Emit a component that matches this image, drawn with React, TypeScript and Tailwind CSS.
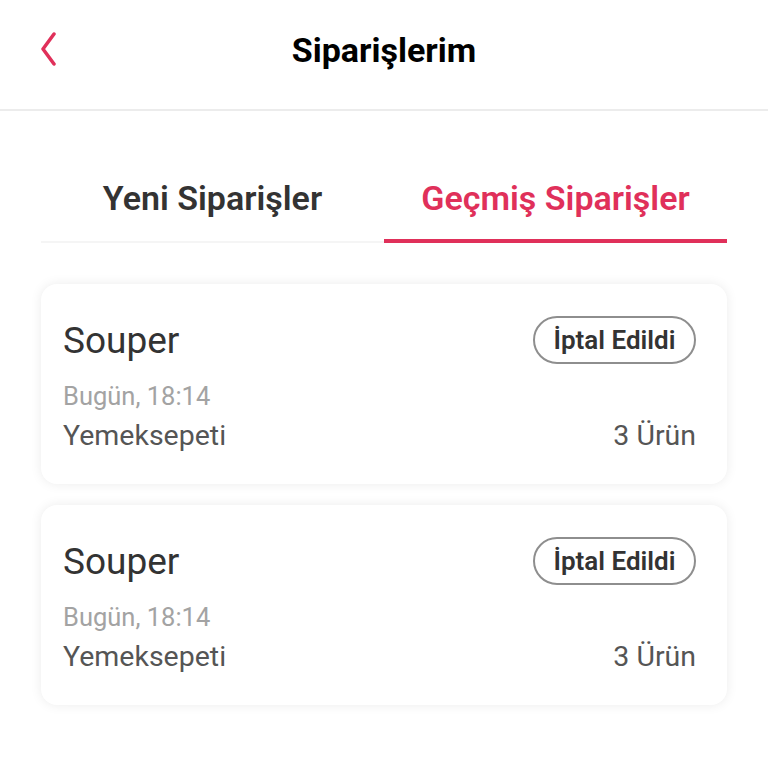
import React from "react";

const Card = () => (
  <div className="rounded-[16px] bg-white shadow-[0_0_12px_rgba(0,0,0,0.08)] pl-[22px] pr-[31px] pt-[32px] pb-[31px]">
    <div className="flex items-center justify-between">
      <span className="text-[37px] leading-[44px] text-[#333] mt-[2px]">Souper</span>
      <span className="h-[48px] w-[163px] flex items-center justify-center rounded-full border-2 border-[#8e8e8e] text-[26px] font-semibold text-[#333]">İptal Edildi</span>
    </div>
    <div className="mt-[17px] text-[25.5px] leading-[30px] text-[#a3a3a3]">Bugün, 18:14</div>
    <div className="mt-[8px] flex items-center justify-between text-[28.5px] leading-[34px] text-[#555]">
      <span>Yemeksepeti</span>
      <span>3 Ürün</span>
    </div>
  </div>
);

export default function App() {
  return (
    <div className="w-[768px] h-[768px] bg-white" style={{ fontFamily: "Roboto, 'Noto Sans', sans-serif" }}>
      <div className="relative h-[111px] border-b-2 border-[#ececec] flex items-center justify-center">
        <svg className="absolute left-[38px] top-[32px]" width="20" height="34" viewBox="0 0 20 34">
          <path d="M16 2 L5 17 L16 32" fill="none" stroke="#e0305a" strokeWidth="3.5" strokeLinecap="round" strokeLinejoin="round" />
        </svg>
        <span className="text-[34px] font-bold text-black -mt-[8px]">Siparişlerim</span>
      </div>
      <div className="mx-[41px] mt-[67px] flex">
        <div className="flex-1 flex flex-col items-center">
          <span className="text-[34px] font-semibold text-[#333] leading-[40px]">Yeni Siparişler</span>
          <div className="mt-[23px] h-[2px] w-full bg-[#f5f5f5]" />
        </div>
        <div className="flex-1 flex flex-col items-center">
          <span className="text-[34px] font-semibold text-[#e0305a] leading-[40px]">Geçmiş Siparişler</span>
          <div className="mt-[21px] h-[4px] w-full bg-[#e0305a]" />
        </div>
      </div>
      <div className="mx-[41px] mt-[41px] flex flex-col gap-[21px]">
        <Card />
        <Card />
      </div>
    </div>
  );
}
